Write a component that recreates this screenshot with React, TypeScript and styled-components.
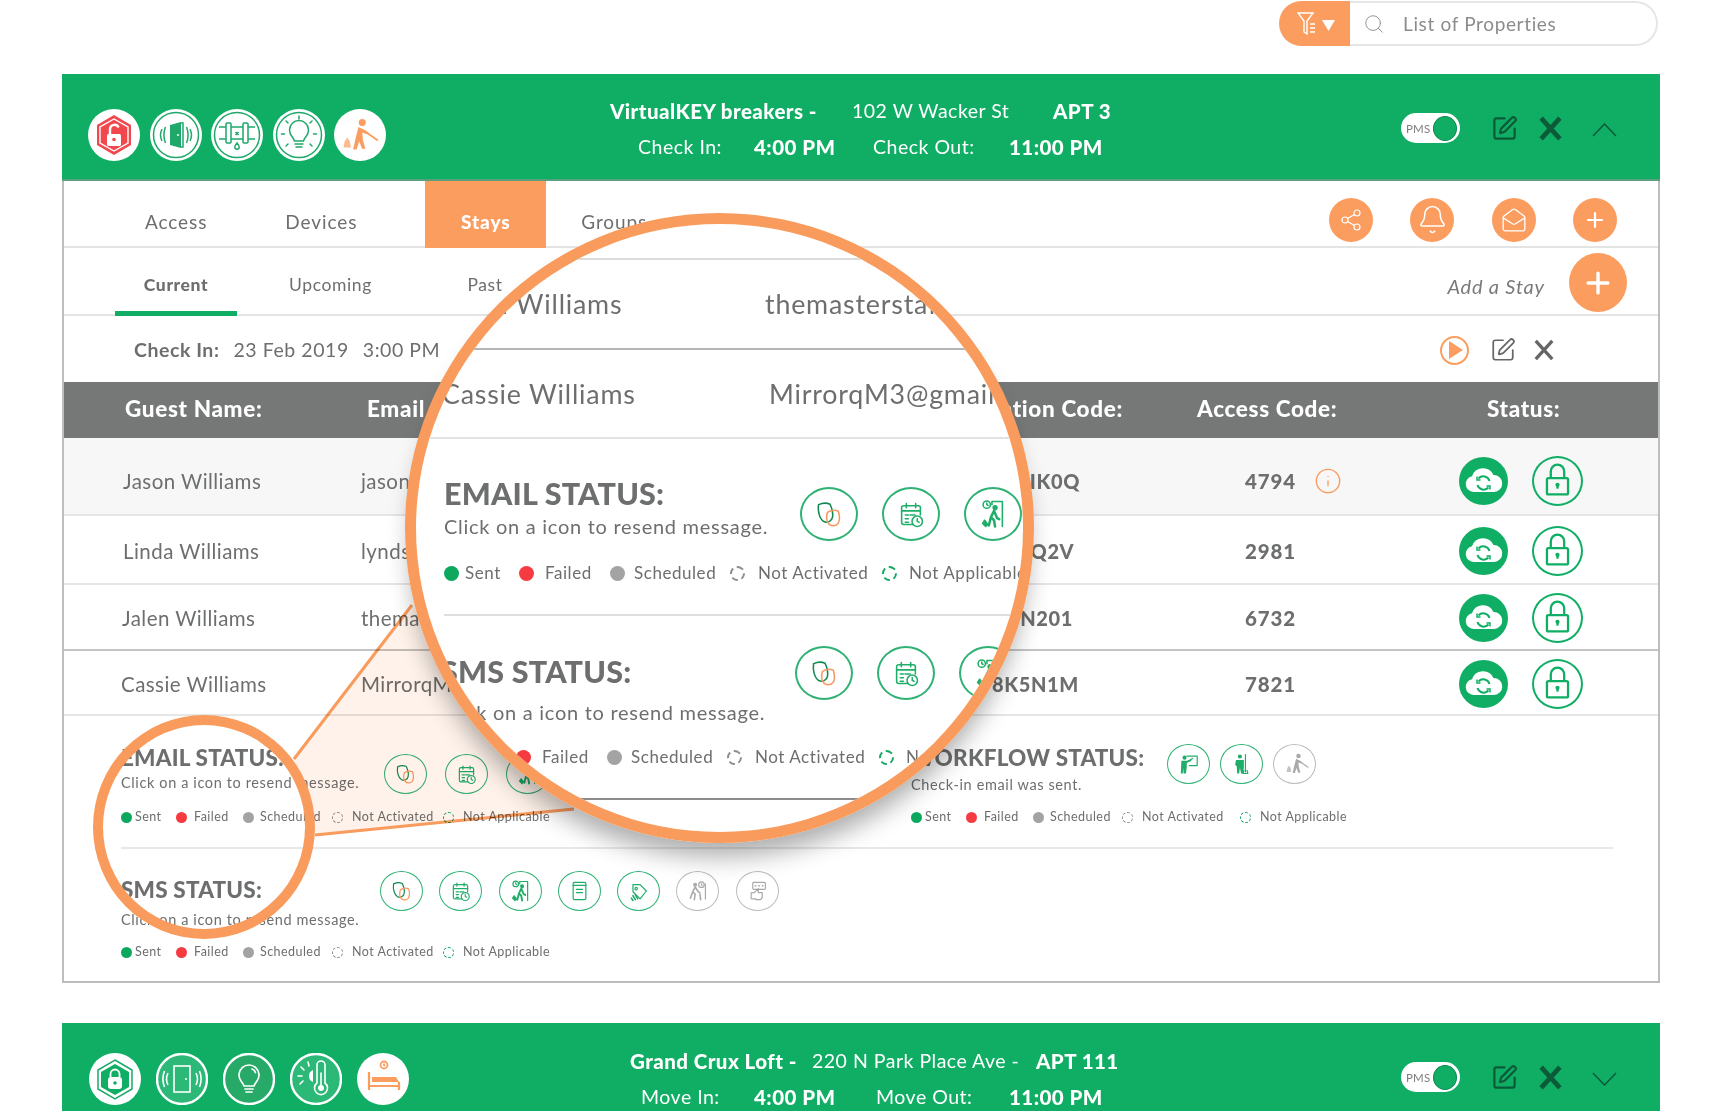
import React from 'react';
import styled, { createGlobalStyle } from 'styled-components';
import { Bell, MailOpen, Plus, Search, Share2, SquarePen, Info } from 'lucide-react';

const GREEN = '#0fae64';
const ORANGE = '#fc9d60';
const RING = '#f99b5c';
const DARK_GREEN = '#0c5a38';
const TEXT = '#6d6e6e';
const FONT = 'Lato, "Open Sans", sans-serif';

const GlobalStyle = createGlobalStyle`
  html, body { margin: 0; padding: 0; background: #fff; }
  body { font-family: ${FONT}; color: ${TEXT}; }
  * { box-sizing: border-box; }
`;

const Page = styled.div`
  position: relative;
  width: 1722px;
  height: 1111px;
  overflow: hidden;
  padding: 1px 62px 0;
  background: #fff;
`;

/* search */
const SearchBar = styled.div`
  display: flex;
  width: 379px;
  height: 45px;
  margin-left: auto;
  margin-right: 2px;
  border: 2px solid #e6e6e6;
  border-left: 0;
  border-radius: 23px;
`;

const FilterButton = styled.div`
  display: flex;
  align-items: center;
  gap: 5px;
  width: 71px;
  height: 45px;
  margin-top: -2px;
  padding-left: 18px;
  background: ${ORANGE};
  border-radius: 23px 0 0 23px;
  color: #fff;
`;

const SearchField = styled.div`
  display: flex;
  align-items: center;
  gap: 18px;
  padding-left: 13px;
  font-size: 19px;
  letter-spacing: 0.65px;
  color: #8b8c8c;
`;

/* property banner */
const Banner = styled.div<{ $gapAbove: number }>`
  display: grid;
  grid-template-columns: 548px 1fr auto;
  height: 107px;
  margin-top: ${(p) => p.$gapAbove}px;
  background: ${GREEN};
  box-shadow: inset 0 -2px 0 #5c9f7e;
  color: #fff;
`;

const DiscRow = styled.div<{ $top: number; $left: number; $gap: number }>`
  display: flex;
  gap: ${(p) => p.$gap}px;
  padding-top: ${(p) => p.$top}px;
  padding-left: ${(p) => p.$left}px;
`;

const Disc = styled.svg`
  width: 52px;
  height: 52px;
  flex: none;
`;

const BannerInfo = styled.div<{ $top: number }>`
  display: flex;
  flex-direction: column;
  gap: 11px;
  padding-top: ${(p) => p.$top}px;
`;

const InfoLine = styled.div<{ $indent: number; $cols: string }>`
  display: grid;
  grid-template-columns: ${(p) => p.$cols};
  margin-left: ${(p) => p.$indent}px;
  line-height: 24px;
  font-size: 19.5px;
  letter-spacing: 0.5px;
  white-space: nowrap;
`;

const Strong = styled.span`
  font-size: 20.5px;
  font-weight: 900;
  letter-spacing: 0.45px;
`;

const Controls = styled.div`
  display: flex;
  align-items: center;
  gap: 20px;
  padding: 0 43px 0 0;
  height: 108px;
  color: ${DARK_GREEN};
`;

const Toggle = styled.div`
  display: flex;
  align-items: center;
  justify-content: space-between;
  width: 59px;
  height: 30px;
  margin-right: 11px;
  padding: 0 3px 0 5px;
  background: #fff;
  border-radius: 15px;
  font-size: 11.5px;
  letter-spacing: 0.2px;
  color: #7d7d7d;
`;

const Knob = styled.span`
  width: 24px;
  height: 25px;
  border-radius: 50%;
  background: ${GREEN};
  border: 1px solid #0a8a4e;
`;

const ChevronMark = styled.svg`
  width: 25px;
  height: 14px;
  margin-left: 9px;
  margin-top: 4px;
  flex: none;
`;

const Cross = styled.svg<{ $size: number; $color: string }>`
  width: ${(p) => p.$size}px;
  height: ${(p) => p.$size}px;
  color: ${(p) => p.$color};
  flex: none;
`;

/* card body */
const Body = styled.div`
  height: 802px;
  border: 2px solid #bdbdbd;
  border-top: 0;
`;

const TabBar = styled.div`
  display: flex;
  justify-content: space-between;
  height: 67px;
  padding-right: 41px;
  border-bottom: 2px solid #e4e4e4;
`;

const TabList = styled.div`
  display: flex;
`;

const Tab = styled.div<{ $offset: number; $active?: boolean }>`
  display: flex;
  align-items: center;
  justify-content: center;
  width: ${(p) => (p.$active ? '121px' : 'auto')};
  height: 67px;
  margin-left: ${(p) => p.$offset}px;
  padding-top: 14px;
  background: ${(p) => (p.$active ? ORANGE : 'transparent')};
  color: ${(p) => (p.$active ? '#fff' : TEXT)};
  font-size: 19px;
  font-weight: ${(p) => (p.$active ? 900 : 400)};
  letter-spacing: 0.9px;
`;

const TabActions = styled.div`
  display: flex;
  align-items: center;
  gap: 37.5px;
  margin-top: 12px;
`;

const RoundAction = styled.div`
  display: flex;
  align-items: center;
  justify-content: center;
  width: 44px;
  height: 44px;
  border-radius: 50%;
  background: ${ORANGE};
  color: #fff;
`;

const SubTabBar = styled.div`
  display: flex;
  justify-content: space-between;
  align-items: stretch;
  height: 68px;
  padding: 0 31px 0 51px;
  border-bottom: 2px solid #e4e4e4;
`;

const SubTabList = styled.div`
  display: flex;
  gap: 32.5px;
`;

const SubTab = styled.div<{ $active?: boolean }>`
  display: flex;
  align-items: center;
  justify-content: center;
  width: 122px;
  height: 68px;
  padding-top: 10px;
  border-bottom: 5px solid ${(p) => (p.$active ? GREEN : 'transparent')};
  font-size: 17.5px;
  font-weight: ${(p) => (p.$active ? 900 : 400)};
  letter-spacing: 0.6px;
`;

const AddStay = styled.div`
  display: flex;
  align-items: center;
  gap: 24px;
  font-size: 20px;
  font-style: italic;
  letter-spacing: 0.8px;
  color: #7a7a7a;
`;

const AddStayLabel = styled.span`
  margin-top: 10px;
`;

const AddButton = styled.div`
  display: flex;
  align-items: center;
  justify-content: center;
  width: 58px;
  height: 59px;
  margin-top: 3px;
  border-radius: 50%;
  background: ${ORANGE};
  color: #fff;
`;

const CheckRow = styled.div`
  display: flex;
  align-items: center;
  justify-content: space-between;
  height: 66px;
  padding: 0 103px 0 70px;
`;

const CheckText = styled.div`
  display: flex;
  gap: 14px;
  font-size: 19.5px;
  letter-spacing: 0.55px;
`;

const CheckLabel = styled.span`
  font-weight: 700;
`;

const CheckActions = styled.div`
  display: flex;
  align-items: center;
  gap: 17px;
  padding-top: 2px;
  color: #666;
`;

const PlayRing = styled.div`
  display: flex;
  align-items: center;
  justify-content: center;
  width: 29px;
  height: 29px;
  margin-right: 4px;
  padding-left: 3px;
  border: 2px solid ${ORANGE};
  border-radius: 50%;
`;

/* table */
const TableHead = styled.div`
  display: grid;
  grid-template-columns: 242px 400px 356px 364px auto;
  align-items: center;
  height: 56px;
  padding-left: 61px;
  padding-bottom: 3px;
  background: #757876;
  color: #fff;
  font-size: 22.5px;
  font-weight: 900;
  letter-spacing: 0.65px;
`;

const HeadRight = styled.div`
  text-align: right;
`;

const HeadAccess = styled.div`
  padding-left: 74px;
`;

const Row = styled.div<{ $height: number; $pad: number; $shade?: boolean; $line?: string }>`
  display: grid;
  grid-template-columns: 238px 631px 253px 214px auto;
  align-items: center;
  height: ${(p) => p.$height}px;
  padding-left: 59px;
  padding-top: ${(p) => p.$pad}px;
  background: ${(p) => (p.$shade ? '#f7f7f7' : '#fff')};
  border-bottom: 2px solid ${(p) => p.$line ?? '#e6e6e6'};
  font-size: 20.5px;
  letter-spacing: 0.45px;
`;

const Name = styled.div<{ $nudge: number }>`
  margin-left: ${(p) => p.$nudge}px;
  white-space: nowrap;
`;

const Code = styled.div`
  font-size: 20px;
  font-weight: 900;
  letter-spacing: 0.6px;
`;

const AccessCell = styled.div`
  display: flex;
  align-items: center;
  gap: 18px;
  font-weight: 900;
  letter-spacing: 0.9px;
  color: ${ORANGE};
`;

const AccessValue = styled.span`
  color: ${TEXT};
`;

const StatusCell = styled.div`
  display: flex;
  align-items: center;
  gap: 24px;
`;

const CloudBadge = styled.div`
  width: 49px;
  height: 48px;
  border-radius: 50%;
  background: ${GREEN};
`;

const LockBadge = styled.div`
  width: 51px;
  height: 50px;
  border: 2px solid ${GREEN};
  border-radius: 50%;
`;

const BadgeArt = styled.svg`
  display: block;
  width: 100%;
  height: 100%;
`;

/* status section */
const StatusArea = styled.div`
  padding: 30px 0 0 57px;
`;

const StatusTop = styled.div`
  display: flex;
`;

const StatusDivider = styled.div`
  width: 1492px;
  height: 2px;
  margin-top: 22px;
  background: #e8e8e8;
`;

const GroupHead = styled.div<{ $top?: number }>`
  display: flex;
  margin-top: ${(p) => p.$top ?? 0}px;
`;

const GroupText = styled.div<{ $width: number }>`
  flex: none;
  width: ${(p) => p.$width}px;
`;

const Title = styled.div<{ $lens?: boolean }>`
  font-size: ${(p) => (p.$lens ? 30.5 : 22.5)}px;
  line-height: ${(p) => (p.$lens ? 34 : 24)}px;
  font-weight: 900;
  letter-spacing: 0.2px;
  white-space: nowrap;
`;

const Hint = styled.div<{ $lens?: boolean; $top: number }>`
  margin-top: ${(p) => p.$top}px;
  font-size: ${(p) => (p.$lens ? 20 : 14.5)}px;
  line-height: ${(p) => (p.$lens ? 28 : 16)}px;
  letter-spacing: ${(p) => (p.$lens ? 0.72 : 0.62)}px;
  white-space: nowrap;
`;

const IconRow = styled.div<{ $gap: number; $top: number }>`
  display: flex;
  gap: ${(p) => p.$gap}px;
  margin-top: ${(p) => p.$top}px;
`;

const IconButton = styled.div<{ $lens?: boolean; $muted?: boolean }>`
  flex: none;
  width: ${(p) => (p.$lens ? 58 : 43)}px;
  height: ${(p) => (p.$lens ? 54 : 40)}px;
  border: ${(p) => (p.$lens ? 2 : 1.5)}px solid ${(p) => (p.$muted ? '#bcbcbc' : '#2fb274')};
  border-radius: 50%;
  color: ${(p) => (p.$muted ? '#a9a9a9' : '#1fae6a')};
`;

const Legend = styled.div<{ $lens?: boolean; $top: number; $cols: string }>`
  display: grid;
  grid-template-columns: ${(p) => p.$cols};
  margin-top: ${(p) => p.$top}px;
  font-size: ${(p) => (p.$lens ? 17 : 12.5)}px;
  line-height: ${(p) => (p.$lens ? 24 : 16)}px;
  letter-spacing: ${(p) => (p.$lens ? 0.55 : 0.45)}px;
  white-space: nowrap;
`;

const LegendItem = styled.div<{ $gap: number }>`
  display: flex;
  align-items: center;
  gap: ${(p) => p.$gap}px;
`;

const Dot = styled.span<{ $lens?: boolean; $fill?: string; $dash?: string }>`
  flex: none;
  width: ${(p) => (p.$lens ? 15 : 11)}px;
  height: ${(p) => (p.$lens ? 15 : 11)}px;
  border-radius: 50%;
  background: ${(p) => p.$fill ?? 'transparent'};
  border: ${(p) => (p.$dash ? `${p.$lens ? 2 : 1.5}px dashed ${p.$dash}` : '0')};
`;

/* magnifier */
const Connector = styled.svg`
  position: absolute;
  left: 0;
  top: 0;
  width: 1722px;
  height: 1111px;
  mix-blend-mode: multiply;
  pointer-events: none;
`;

const SmallLoupe = styled.div`
  position: absolute;
  left: 93px;
  top: 715px;
  width: 222px;
  height: 224px;
  border: 10px solid ${RING};
  border-radius: 50%;
`;

const Lens = styled.div`
  position: absolute;
  left: 405px;
  top: 213px;
  width: 629px;
  height: 630px;
  overflow: hidden;
  border: 11px solid ${RING};
  border-radius: 50%;
  background: #fff;
`;

const LensShadow = styled.div`
  position: absolute;
  left: 405px;
  top: 213px;
  width: 629px;
  height: 630px;
  border-radius: 50%;
  box-shadow: 0 20px 24px -6px rgba(0, 0, 0, 0.32);
`;

const LensRow = styled.div<{ $height: number; $line: string; $emailAt?: number; $nameAt?: number }>`
  display: grid;
  grid-template-columns: ${(p) => p.$emailAt ?? 327}px auto;
  align-items: center;
  height: ${(p) => p.$height}px;
  padding-left: ${(p) => p.$nameAt ?? 26}px;
  border-bottom: 2px solid ${(p) => p.$line};
  font-size: 26.8px;
  letter-spacing: 0.8px;
  white-space: nowrap;
`;

const LensBody = styled.div`
  padding: 37px 0 0 28px;
  width: 700px;
`;

const LensDivider = styled.div`
  width: 600px;
  height: 2px;
  margin-top: 29px;
  background: #dedede;
`;

const LensSms = styled.div`
  margin: 38px 0 0 -3px;
`;

const LensBottomLine = styled.div`
  width: 600px;
  height: 2px;
  margin-top: 29px;
  background: #8c8c8c;
`;

/* drawings */
const ART = { fill: 'none', stroke: 'currentColor', strokeWidth: 1.5, strokeLinecap: 'round', strokeLinejoin: 'round' } as const;

const ChainArt = () => (
  <>
    <path d="M14 15c4-1.800 8-1.800 11-.4 1.600 3.400 3 9 2.400 12.400-.7 4-5 6-8.400 4.200-4-2.200-6-10-5-16.200z" stroke="#108a52" />
    <path d="M22.500 22.500c3-2 7.500-2.500 10.500-1.200 1.300 4.700 1.300 9.700-.5 12-2.700 3-6.700 2.200-8.800.2-2.200-2.900-2.200-7.800-1.200-11z" stroke="#f59a62" />
  </>
);

const CalendarArt = () => (
  <>
    <path d="M26 34h-9a2 2 0 0 1-2-2V18a2 2 0 0 1 2-2h14a2 2 0 0 1 2 2v7" />
    <path d="M15 21h18M19.500 14v4M28.500 14v4M18.500 25h3M18.500 28.500h3M18.500 32h3M23 25h5" />
    <circle cx="30" cy="31" r="5" />
    <path d="M30 28.500V31l1.800 1" />
  </>
);

const WalkerArt = () => (
  <>
    <circle cx="18" cy="15" r="3.500" />
    <path d="M18 13.500V15l1.200.8" />
    <path d="M23 12h10v24M23 12v3" />
    <circle cx="26" cy="18" r="1.800" fill="currentColor" />
    <path d="M25 21l-3 6 3 3 1 6M25 21l3 7 2 1M22 27l-2 8" strokeWidth="2.400" />
    <path d="M16 30l3 4-2 2-3-3z" fill="currentColor" />
  </>
);

const DocArt = () => (
  <>
    <rect x="16" y="13" width="16" height="22" rx="1.500" />
    <path d="M16 17h16M20 22h8M20 26h8" />
  </>
);

const TagArt = () => (
  <>
    <path d="M17 16h9l8 8-8 10-9-9z" />
    <circle cx="21" cy="21" r="1.500" />
    <path d="M17 30l3 5M20 29l3 5M15 33l2 3" strokeWidth="2" />
  </>
);

const GreyWalkerArt = () => (
  <>
    <circle cx="29" cy="16" r="3.500" />
    <path d="M29 14.500V16l1 .8M34 15v19" />
    <circle cx="21" cy="16" r="1.800" fill="currentColor" />
    <path d="M21 19l-3 6 3 3-1 7M21 19l4 6 2 1M18 25l-3 8M27 28l1 7" strokeWidth="2" />
  </>
);

const KeypadArt = () => (
  <>
    <rect x="18" y="13" width="16" height="9" rx="1.500" />
    <path d="M21.500 17.500h.1M26 17.500h.1M30.500 17.500h.1" strokeWidth="2.200" />
    <path d="M22 34h-5a1 1 0 0 1-1-1v-6a1 1 0 0 1 1-1h3l5-5v5h5v6l-2 3h-6" />
  </>
);

const TeacherArt = () => (
  <>
    <path d="M22 14h13v12H25M25 20l4-3" />
    <circle cx="19" cy="16" r="2.600" fill="currentColor" stroke="none" />
    <path d="M15 20h7l5-2 .8 1.800-6 3V28l-1 8h-3l-.5-7-.5 7h-2.500z" fill="currentColor" stroke="none" />
  </>
);

const WorkerArt = () => (
  <>
    <circle cx="22" cy="14.500" r="2.600" fill="currentColor" stroke="none" />
    <path d="M17 19h10v9l-1 8h-2.500l-1.500-7-1 7h-2.500L18 27l-2-2z" fill="currentColor" stroke="none" />
    <path d="M29 12v22M27 32l-1 4h6l-1-4" />
  </>
);

const CleanerArt = () => (
  <>
    <circle cx="29" cy="14" r="2.800" fill="currentColor" stroke="none" />
    <path d="M26 17.500l5 2.500 3 2-1 1.500-4-1.500.5 6 2 7h-2.600L26.500 29l-2 6.500h-2.800l2-9z" fill="currentColor" stroke="none" />
    <path d="M31 21l10 7" />
    <path d="M14 34l1-5 2-3 2 3 1 5z" fill="currentColor" stroke="none" opacity="0.7" />
  </>
);

const StatusIcon = ({ art, lens, muted }: { art: React.ReactNode; lens?: boolean; muted?: boolean }) => (
  <IconButton $lens={lens} $muted={muted}>
    <BadgeArt viewBox="0 0 48 48" {...ART}>
      {art}
    </BadgeArt>
  </IconButton>
);

const HexShape = ({ fill, stroke }: { fill: string; stroke: string }) => (
  <>
    <path d="M26 6l17 10v20L26 46 9 36V16z" fill={fill} stroke="none" />
    <path d="M26 10l14 8v16l-14 8-14-8V18z" fill="none" stroke={stroke} strokeWidth="1.400" />
  </>
);

const BannerIcons = {
  hexAlert: (
    <Disc viewBox="0 0 52 52">
      <circle cx="26" cy="26" r="26" fill="#fff" />
      <HexShape fill="#f1484e" stroke="#fff" />
      <rect x="19" y="25" width="14" height="12" rx="1.500" fill="#fff" />
      <path d="M22 25v-5a4.500 4.500 0 0 1 8.600-1.600" fill="none" stroke="#fff" strokeWidth="2.400" />
      <circle cx="26" cy="30.500" r="1.800" fill="#f1484e" />
    </Disc>
  ),
  door: (
    <Disc viewBox="0 0 52 52">
      <circle cx="26" cy="26" r="26" fill="#fff" />
      <g fill="none" stroke="#1fa86a" strokeWidth="1.500">
        <circle cx="26" cy="26" r="22.500" />
        <path d="M31 14h2v24h-2M12 20c-2 4-2 8 0 12M15.500 18c-2 5-2 11 0 16M40 20c2 4 2 8 0 12M36.500 18c2 5 2 11 0 16" />
      </g>
      <path d="M20 16l11-3v26l-11-3z" fill="#1fa86a" />
      <circle cx="28" cy="26" r="1" fill="#fff" />
    </Disc>
  ),
  pipe: (
    <Disc viewBox="0 0 52 52">
      <circle cx="26" cy="26" r="26" fill="#fff" />
      <g fill="none" stroke="#1fa86a" strokeWidth="1.500">
        <circle cx="26" cy="26" r="22.500" />
        <path d="M8 18h36M8 30h36" />
        <rect x="15" y="14" width="5" height="20" rx="1" fill="#fff" />
        <rect x="32" y="14" width="5" height="20" rx="1" fill="#fff" />
        <path d="M24.500 23l3 3M27.500 23l-3 3" />
        <path d="M26 34c-1.600 2-2.200 3-2.200 4a2.200 2.200 0 0 0 4.400 0c0-1-.6-2-2.200-4z" />
      </g>
    </Disc>
  ),
  bulb: (
    <Disc viewBox="0 0 52 52">
      <circle cx="26" cy="26" r="26" fill="#fff" />
      <g fill="none" stroke="#1fa86a" strokeWidth="1.500" strokeLinecap="round">
        <circle cx="26" cy="26" r="22.500" />
        <path d="M21.500 32c-.5-2-1.500-3-2.500-4.500a9.500 9.500 0 1 1 14 0c-1 1.500-2 2.500-2.500 4.500z" />
        <path d="M22 35h8M23 38h6M26 7v3M13 12l2 2M39 12l-2 2M8.500 25h3M40.500 25h3M13 37l2-2M39 37l-2-2" />
      </g>
    </Disc>
  ),
  cleaner: (
    <Disc viewBox="0 0 52 52">
      <circle cx="26" cy="26" r="26" fill="#fff" />
      <g color={ORANGE} {...ART} transform="translate(-8 -4) scale(1.25)">
        <CleanerArt />
      </g>
    </Disc>
  ),
  hexLock: (
    <Disc viewBox="0 0 52 52">
      <circle cx="26" cy="26" r="26" fill="#fff" />
      <path d="M26 7l17 10v19L26 46 9 36V17z" fill="#fff" stroke="#1fa86a" strokeWidth="1.500" />
      <path d="M26 11l14 8v15l-14 8-14-8V19z" fill={GREEN} />
      <rect x="19" y="24" width="14" height="12" rx="3" fill="#fff" />
      <path d="M21.500 24v-3a4.500 4.500 0 0 1 9 0v3" fill="none" stroke="#fff" strokeWidth="1.800" />
      <circle cx="26" cy="30" r="1.800" fill={GREEN} />
    </Disc>
  ),
  phone: (
    <Disc viewBox="0 0 52 52">
      <circle cx="26" cy="26" r="25" fill="#2cb876" stroke="#fff" strokeWidth="2.400" />
      <g fill="none" stroke="#fff" strokeWidth="1.600">
        <rect x="18" y="13" width="16" height="26" />
        <path d="M12 20c-2 4-2 8 0 12M8.500 18c-2 5-2 11 0 16M40 20c2 4 2 8 0 12M43.500 18c2 5 2 11 0 16" />
      </g>
      <circle cx="30" cy="26" r="1" fill="#fff" />
    </Disc>
  ),
  bulbOutline: (
    <Disc viewBox="0 0 52 52">
      <circle cx="26" cy="26" r="25" fill="#27a968" stroke="#fff" strokeWidth="2.400" />
      <g fill="none" stroke="#fff" strokeWidth="1.700" strokeLinecap="round">
        <path d="M21 33c-.5-2-2-3.500-3-5a10 10 0 1 1 16 0c-1 1.500-2.500 3-3 5z" />
        <path d="M22 36h8M23 39h6M29 16c2 .6 3 2 3.400 3.600" />
      </g>
    </Disc>
  ),
  thermo: (
    <Disc viewBox="0 0 52 52">
      <circle cx="26" cy="26" r="25" fill="#2cb876" stroke="#fff" strokeWidth="2.400" />
      <g fill="none" stroke="#fff" strokeWidth="1.600" strokeLinecap="round">
        <path d="M27 30V12a4 4 0 0 1 8 0v18a6.500 6.500 0 1 1-8 0z" />
        <path d="M8 23h4M11 14l3 3M18 9l1 4M10 31l3-3M31 20v16" />
      </g>
      <path d="M23 17a6.500 6.500 0 0 0 0 12z" fill="#fff" />
      <circle cx="31" cy="35" r="3" fill="#fff" />
    </Disc>
  ),
  bed: (
    <Disc viewBox="0 0 52 52">
      <circle cx="26" cy="26" r="26" fill="#fff" />
      <g fill="none" stroke={ORANGE} strokeWidth="1.800">
        <circle cx="27" cy="12" r="3.500" />
        <path d="M27 10.500V12l1 .8" />
        <path d="M12 19v18M42 29v8M12 33h30" strokeWidth="2.200" />
      </g>
      <path d="M15 24h24l3 5H15z" fill={ORANGE} />
    </Disc>
  ),
};

const CrossMark = ({ size, color, weight }: { size: number; color: string; weight: number }) => (
  <Cross $size={size} $color={color} viewBox="0 0 24 24" fill="none" stroke="currentColor" strokeWidth={weight}>
    <path d="M3 2l18 20M21 2L3 22" />
  </Cross>
);

const FilterIcon = () => (
  <svg width="38" height="28" viewBox="0 0 38 28" fill="none" stroke="#fff" strokeWidth="1.400">
    <path d="M1 3h15l-6 8v13l-3-2V11z" />
    <path d="M13 14h5M13 18h5M13 22h5" />
    <path d="M25 10h13l-6.500 11z" fill="#fff" stroke="none" />
  </svg>
);

const legendItems = [
  { label: 'Sent', fill: '#0da85e', gap: 3, lensGap: 6 },
  { label: 'Failed', fill: '#f63b40', gap: 7, lensGap: 11 },
  { label: 'Scheduled', fill: '#a3a3a3', gap: 6, lensGap: 9 },
  { label: 'Not Activated', dash: '#8d8d8d', gap: 9, lensGap: 13 },
  { label: 'Not Applicable', dash: '#16a862', gap: 9, lensGap: 12 },
];

const StatusLegend = ({ lens, top, cols }: { lens?: boolean; top: number; cols?: string }) => (
  <Legend $lens={lens} $top={top} $cols={cols ?? (lens ? '75px 91px 120px 152px auto' : '55px 67px 89px 111px auto')}>
    {legendItems.map((item) => (
      <LegendItem key={item.label} $gap={lens ? item.lensGap : item.gap}>
        <Dot $lens={lens} $fill={item.fill} $dash={item.dash} />
        {item.label}
      </LegendItem>
    ))}
  </Legend>
);

const guests = [
  { name: 'Jason Williams', email: 'jason@gmail.com', code: 'WNIK0Q', access: '4794', height: 78, pad: 10, shade: true, nudge: 0, info: true },
  { name: 'Linda Williams', email: 'lynds@gmail.com', code: '4X7Q2V', access: '2981', height: 69, pad: 3, nudge: 0 },
  { name: 'Jalen Williams', email: 'themasterstaffing@gmail.com', code: 'H3N201', access: '6732', height: 66, pad: 2, nudge: -1, line: '#c4c4c4' },
  { name: 'Cassie Williams', email: 'MirrorqM3@gmail.com', code: '8K5N1M', access: '7821', height: 65, pad: 3, nudge: -2 },
];

const PropertyInfo = ({ top, lines }: { top: number; lines: { indent: number; cols: string; cells: React.ReactNode[] }[] }) => (
  <BannerInfo $top={top}>
    {lines.map((line, i) => (
      <InfoLine key={i} $indent={line.indent} $cols={line.cols}>
        {line.cells.map((cell, j) => (
          <span key={j}>{cell}</span>
        ))}
      </InfoLine>
    ))}
  </BannerInfo>
);

const BannerControls = ({ open }: { open: boolean }) => (
  <Controls>
    <Toggle>
      PMS
      <Knob />
    </Toggle>
    <SquarePen size={27} strokeWidth={2} />
    <CrossMark size={25} color={DARK_GREEN} weight={4.500} />
    <ChevronMark viewBox="0 0 25 14" fill="none" stroke={DARK_GREEN} strokeWidth="1.500">
      <path d={open ? 'M1 13L12.500 1L24 13' : 'M1 1L12.500 13L24 1'} />
    </ChevronMark>
  </Controls>
);

export default function App() {
  return (
    <Page>
      <GlobalStyle />
      <SearchBar>
        <FilterButton>
          <FilterIcon />
        </FilterButton>
        <SearchField>
          <Search size={22} strokeWidth={1} color="#8b8c8c" />
          List of Properties
        </SearchField>
      </SearchBar>

      <Banner $gapAbove={28}>
        <DiscRow $top={35} $left={26} $gap={9.5}>
          {BannerIcons.hexAlert}
          {BannerIcons.door}
          {BannerIcons.pipe}
          {BannerIcons.bulb}
          {BannerIcons.cleaner}
        </DiscRow>
        <PropertyInfo
          top={25}
          lines={[
            {
              indent: 0,
              cols: '242px 201px auto',
              cells: [<Strong>VirtualKEY breakers -</Strong>, '102 W Wacker St', <Strong>APT 3</Strong>],
            },
            {
              indent: 28,
              cols: '116px 119px 136px auto',
              cells: ['Check In:', <Strong>4:00 PM</Strong>, 'Check Out:', <Strong>11:00 PM</Strong>],
            },
          ]}
        />
        <BannerControls open />
      </Banner>

      <Body>
        <TabBar>
          <TabList>
            <Tab $offset={81}>Access</Tab>
            <Tab $offset={78}>Devices</Tab>
            <Tab $offset={68} $active>
              Stays
            </Tab>
            <Tab $offset={35}>Groups</Tab>
          </TabList>
          <TabActions>
            <RoundAction>
              <Share2 size={24} strokeWidth={1.200} />
            </RoundAction>
            <RoundAction>
              <Bell size={31} strokeWidth={1.200} />
            </RoundAction>
            <RoundAction>
              <MailOpen size={26} strokeWidth={1.200} />
            </RoundAction>
            <RoundAction>
              <Plus size={24} strokeWidth={2.200} />
            </RoundAction>
          </TabActions>
        </TabBar>

        <SubTabBar>
          <SubTabList>
            <SubTab $active>Current</SubTab>
            <SubTab>Upcoming</SubTab>
            <SubTab>Past</SubTab>
          </SubTabList>
          <AddStay>
            <AddStayLabel>Add a Stay</AddStayLabel>
            <AddButton>
              <Plus size={34} strokeWidth={2.400} />
            </AddButton>
          </AddStay>
        </SubTabBar>

        <CheckRow>
          <CheckText>
            <CheckLabel>Check In:</CheckLabel>
            <span>23 Feb 2019</span>
            <span>3:00 PM</span>
          </CheckText>
          <CheckActions>
            <PlayRing>
              <svg width="14" height="18" viewBox="0 0 14 18">
                <path d="M0 0l14 9L0 18z" fill={ORANGE} />
              </svg>
            </PlayRing>
            <SquarePen size={26} strokeWidth={1.600} />
            <CrossMark size={22} color="#666" weight={3.600} />
          </CheckActions>
        </CheckRow>

        <TableHead>
          <div>Guest Name:</div>
          <div>Email</div>
          <HeadRight>Activation Code:</HeadRight>
          <HeadAccess>Access Code:</HeadAccess>
          <div>Status:</div>
        </TableHead>

        {guests.map((guest) => (
          <Row key={guest.name} $height={guest.height} $pad={guest.pad} $shade={guest.shade} $line={guest.line}>
            <Name $nudge={guest.nudge}>{guest.name}</Name>
            <div>{guest.email}</div>
            <Code>{guest.code}</Code>
            <AccessCell>
              <AccessValue>{guest.access}</AccessValue>
              {guest.info && <Info size={28} strokeWidth={1.200} />}
            </AccessCell>
            <StatusCell>
              <CloudBadge>
                <BadgeArt viewBox="0 0 48 48">
                  <path d="M14 35a8 8 0 0 1-1.500-15.800A11.500 11.500 0 0 1 34 18a8.500 8.500 0 0 1 .5 17z" fill="#fff" />
                  <path d="M30 24a6.500 6.500 0 0 0-11-2.500M18 28a6.500 6.500 0 0 0 11 2.500" fill="none" stroke={GREEN} strokeWidth="2" />
                  <path d="M17.500 19.500v3.500h3.500M30.500 32.500V29H27" fill="none" stroke={GREEN} strokeWidth="1.500" />
                </BadgeArt>
              </CloudBadge>
              <LockBadge>
                <BadgeArt viewBox="0 0 48 48" fill="none" stroke={GREEN} strokeWidth="2.400">
                  <rect x="13" y="21" width="22" height="17" rx="1.500" />
                  <path d="M17 21v-7a7 7 0 0 1 14 0v7" />
                  <circle cx="24" cy="28" r="2.200" fill={GREEN} stroke="none" />
                  <path d="M24 28v4" />
                </BadgeArt>
              </LockBadge>
            </StatusCell>
          </Row>
        ))}

        <StatusArea>
          <StatusTop>
            <GroupText $width={790}>
              <GroupHead>
                <GroupText $width={263}>
                  <Title>EMAIL STATUS:</Title>
                  <Hint $top={5}>Click on a icon to resend message.</Hint>
                </GroupText>
                <IconRow $gap={18} $top={8}>
                  <StatusIcon art={<ChainArt />} />
                  <StatusIcon art={<CalendarArt />} />
                  <StatusIcon art={<WalkerArt />} />
                </IconRow>
              </GroupHead>
              <StatusLegend top={15} />
            </GroupText>
            <div>
              <GroupHead>
                <GroupText $width={256}>
                  <Title>WORKFLOW STATUS:</Title>
                  <Hint $top={7}>Check-in email was sent.</Hint>
                </GroupText>
                <IconRow $gap={10} $top={-2}>
                  <StatusIcon art={<TeacherArt />} />
                  <StatusIcon art={<WorkerArt />} />
                  <StatusIcon art={<CleanerArt />} muted />
                </IconRow>
              </GroupHead>
              <StatusLegend top={16} cols="55px 67px 89px 118px auto" />
            </div>
          </StatusTop>
          <StatusDivider />
          <GroupHead $top={29}>
            <GroupText $width={259}>
              <Title>SMS STATUS:</Title>
              <Hint $top={10}>Click on a icon to resend message.</Hint>
            </GroupText>
            <IconRow $gap={16.3} $top={-7}>
              <StatusIcon art={<ChainArt />} />
              <StatusIcon art={<CalendarArt />} />
              <StatusIcon art={<WalkerArt />} />
              <StatusIcon art={<DocArt />} />
              <StatusIcon art={<TagArt />} />
              <StatusIcon art={<GreyWalkerArt />} muted />
              <StatusIcon art={<KeypadArt />} muted />
            </IconRow>
          </GroupHead>
          <StatusLegend top={16} />
        </StatusArea>
      </Body>

      <Banner $gapAbove={40}>
        <DiscRow $top={30} $left={27} $gap={15}>
          {BannerIcons.hexLock}
          {BannerIcons.phone}
          {BannerIcons.bulbOutline}
          {BannerIcons.thermo}
          {BannerIcons.bed}
        </DiscRow>
        <PropertyInfo
          top={26}
          lines={[
            {
              indent: 20,
              cols: '182px 224px auto',
              cells: [<Strong>Grand Crux Loft -</Strong>, '220 N Park Place Ave -', <Strong>APT 111</Strong>],
            },
            {
              indent: 31,
              cols: '113px 122px 133px auto',
              cells: ['Move In:', <Strong>4:00 PM</Strong>, 'Move Out:', <Strong>11:00 PM</Strong>],
            },
          ]}
        />
        <BannerControls open={false} />
      </Banner>

      <Connector viewBox="0 0 1722 1111">
        <path d="M294 759L412 605L574 809L315 835z" fill="#fef2ea" />
        <path d="M294 759L412 605M574 809L315 835" stroke={RING} strokeWidth="3" fill="none" />
      </Connector>
      <SmallLoupe />
      <LensShadow />

      <Lens>
        <LensRow $height={36} $line="#dcdcdc" />
        <LensRow $height={90} $line="#b5b5b5" $emailAt={320} $nameAt={29}>
          <span>Jalen Williams</span>
          <span>themasterstaffing@gmail.com</span>
        </LensRow>
        <LensRow $height={89} $line="#e2e2e2">
          <span>Cassie Williams</span>
          <span>MirrorqM3@gmail.com</span>
        </LensRow>
        <LensBody>
          <GroupHead>
            <GroupText $width={356}>
              <Title $lens>EMAIL STATUS:</Title>
              <Hint $lens $top={2}>
                Click on a icon to resend message.
              </Hint>
            </GroupText>
            <IconRow $gap={24} $top={11}>
              <StatusIcon lens art={<ChainArt />} />
              <StatusIcon lens art={<CalendarArt />} />
              <StatusIcon lens art={<WalkerArt />} />
            </IconRow>
          </GroupHead>
          <StatusLegend lens top={20} />
          <LensDivider />
          <LensSms>
            <GroupHead>
              <GroupText $width={354}>
                <Title $lens>SMS STATUS:</Title>
                <Hint $lens $top={10}>
                  Click on a icon to resend message.
                </Hint>
              </GroupText>
              <IconRow $gap={24} $top={-8}>
                <StatusIcon lens art={<ChainArt />} />
                <StatusIcon lens art={<CalendarArt />} />
                <StatusIcon lens art={<WalkerArt />} />
              </IconRow>
            </GroupHead>
            <StatusLegend lens top={19} />
          </LensSms>
          <LensBottomLine />
        </LensBody>
      </Lens>
    </Page>
  );
}
